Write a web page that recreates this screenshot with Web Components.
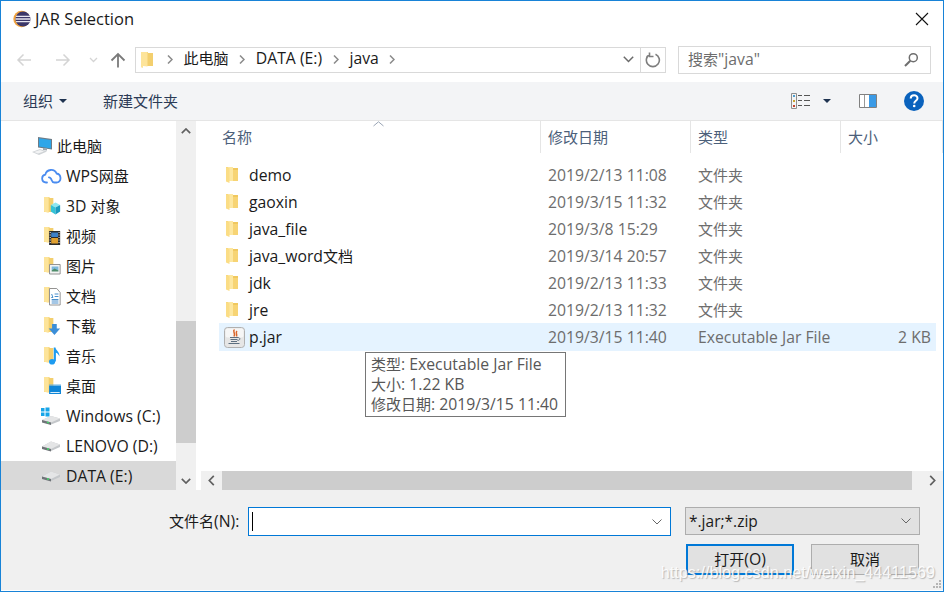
<!DOCTYPE html>
<html>
<head>
<meta charset="utf-8">
<title>JAR Selection</title>
<style>
  html, body { margin: 0; padding: 0; height: 100%; background: #fff; }
  body { font-family: "Open Sans", "Noto Sans CJK SC", sans-serif; font-size: 15.750px; color: #1a1a1a; }
</style>
</head>
<body>
<jar-dialog></jar-dialog>

<script>
const FONT = `"Open Sans", "Noto Sans CJK SC", sans-serif`;

// the dialog's chinese runs are a touch smaller than its latin text
const cjk = (s) => s.replace(/[\u4e00-\u9fff]+/g, (m) => `<span style="font-size:15px">${m}</span>`);

// folder with a small overlay, as in the explorer sidebar
const sideFolder = (inner) => `<svg width="17" height="20" viewBox="0 0 20 20" preserveAspectRatio="none" style="margin-left:3px">
    <path d="M0 1h6l1 1h4v14H0z" fill="#f3cf6e"/>
    <path d="M0 1h5.500v16L0 15.500z" fill="#fde49a"/>
    ${inner}
  </svg>`;

const ICONS = {
  eclipse: `<svg width="18" height="18" viewBox="0 0 18 18">
    <circle cx="8.600" cy="9" r="8.300" fill="#f0a340"/>
    <circle cx="10" cy="9" r="7.600" fill="#3c3769"/>
    <path d="M3 6.300h14M2.500 9h15M3 11.700h14" stroke="#e8e6f0" stroke-width="1.300"/>
  </svg>`,
  tinyfolder: `<svg width="13" height="18" viewBox="0 0 13 18">
    <path d="M0 1h7v1h5v13H0z" fill="#f3cf6e"/>
    <path d="M0 1h6.500v14.500L2 15v2l-2-.8z" fill="#fde49a"/>
  </svg>`,
  folder: `<svg width="13" height="18" viewBox="0 0 13 18">
    <path d="M0 1h6l1 1h5v13H0z" fill="#f0c85e"/>
    <path d="M1.500 1H7v14H1.500z" fill="#fde7a0"/>
    <path d="M0 1l3.500 1.200V17L0 15.500z" fill="#fbdd85"/>
    <path d="M7 4h5v11H7z" fill="#f7d474"/>
  </svg>`,
  pc: `<svg width="21" height="18" viewBox="0 0 21 18">
    <path d="M6 0l14 2v10.500L6 10.500z" fill="#6d7b86"/>
    <path d="M7 1.200l12 1.700v8.500L7 9.600z" fill="#2ea6e8"/>
    <path d="M11 11l4 .6v2l-4-.6z" fill="#9aa4ab"/>
    <path d="M0 15l8-3 7 2.500-8 3.500z" fill="#cfd3d6"/>
    <path d="M2 15l6-2 4 1.500-6 2z" fill="#f2f3f4"/>
  </svg>`,
  cloud: `<svg width="21" height="18" viewBox="0 0 21 18">
    <path d="M6 15.500H5a4 4 0 0 1-.7-7.900A6 6 0 0 1 15.600 6.500a4.600 4.600 0 0 1 .4 9h-2.500a3 3 0 0 1-2.800-2.200c-.6-2-1-3-2.800-3" fill="none" stroke="#4a8cf0" stroke-width="1.800" stroke-linecap="round"/>
  </svg>`,
  obj3d: sideFolder(`
    <path d="M8 9l5.500-2.500L19 9l-5.500 2.500z" fill="#8ee6f0"/>
    <path d="M8 9v6.500l5.500 3v-7z" fill="#33c3d6"/>
    <path d="M19 9v6.500l-5.500 3v-7z" fill="#1a9bc0"/>`),
  video: sideFolder(`
    <path d="M6 5h13v14H6z" fill="#2b2b2b"/>
    <path d="M8.500 6.500h8v4.500h-8z" fill="#3d80c8"/>
    <path d="M8.500 12h8v5.500h-8z" fill="#e0a030"/>
    <path d="M7.300 6v1M7.300 8.500v1M7.300 11v1M7.300 13.500v1M7.300 16v1M17.700 6v1M17.700 8.500v1M17.700 11v1M17.700 13.500v1M17.700 16v1" stroke="#eee" stroke-width="1.200"/>`),
  picture: sideFolder(`
    <path d="M6.500 8.500h12.500v9.500H6.500z" fill="#f4f4f4" stroke="#8b8b8b"/>
    <path d="M9 10.500h8v4H9z" fill="#7db8dc"/>
    <path d="M9 14.500l3.500-2 4.500 2v1H9z" fill="#4e8c6a"/>`),
  doc: sideFolder(`
    <path d="M6.500 2.500H15l4 4v12.500H6.500z" fill="#fff" stroke="#8b8b8b"/>
    <path d="M9 8l1.500 3.500H8.500M12.500 8h4.500M12.500 10.500h4.500M9 13.500h8M9 15h8M9 17h8" stroke="#3a86c8" fill="none"/>`),
  download: sideFolder(`
    <path d="M9.500 8h5.500v4.500h4l-6.700 6.500-6.800-6.500h4z" fill="#3b8ed8"/>`),
  music: sideFolder(`
    <ellipse cx="9.500" cy="15.800" rx="3.600" ry="2.800" fill="#1d9bf0"/>
    <path d="M11.500 15.500V1.500h2c.3 3 5 4 4.700 9-1.200-2.400-3-3.400-4.200-3.700v8.700z" fill="#1d9bf0"/>`),
  desktop: sideFolder(`
    <path d="M6 9.500h14v8.500H6z" fill="#0f86d8"/>
    <path d="M7.500 16h11v1h-11z" fill="#d8edf9"/>
    <path d="M6 9h14" stroke="#5aa9de"/>`),
  drivec: `<svg width="20" height="18" viewBox="0 0 20 18">
    <path d="M0 1h3.500v3.500H0zM4.500 .500h4v4h-4zM0 5.500h3.500V9H0zM4.500 5.500h4v4h-4z" fill="#18a5e8"/>
    <path d="M1 13l9-4 9 2.500v2.500l-9 3.500-9-2.500z" fill="#c4c7ca"/>
    <path d="M1 13l9 2.500 9-4-9-2.500z" fill="#e4e5e6"/>
    <path d="M1 13l9 2.500v2.500l-9-2.500z" fill="#6f7478"/>
    <path d="M6 15.300l2 .5" stroke="#47d36a" stroke-width="1.500"/>
  </svg>`,
  drive: `<svg width="20" height="12" viewBox="0 0 20 12">
    <path d="M1 6.500l9-5 9 3v2.500l-9 4-9-2.500z" fill="#c4c7ca"/>
    <path d="M1 6.500l9 2.500 9-4.500-9-3z" fill="#e4e5e6"/>
    <path d="M1 6.500l9 2.500v2.500L1 9z" fill="#6f7478"/>
    <path d="M6 8.800l2 .5" stroke="#47d36a" stroke-width="1.500"/>
  </svg>`,
  jar: `<svg width="21" height="21" viewBox="0 0 21 21">
    <rect x=".500" y=".500" width="20" height="20" rx="3" fill="#e6e6e6" stroke="#b0b0b0"/>
    <rect x="1.500" y="1.500" width="18" height="9" rx="2" fill="#f6f6f6"/>
    <path d="M10.500 2.500c-2.500 2 1.500 3.500-.5 7M13 4c-2 2 .5 2.500-.5 5.500" stroke="#d9662c" stroke-width="1.500" fill="none"/>
    <path d="M6 10.500h8M6.500 12.500h7M7 14.500h6M4.500 16.500h11" stroke="#5c6f80" stroke-width="1.100"/>
    <path d="M14 10.500c2.500 0 2.500 3-.5 3" stroke="#5c6f80" fill="none"/>
  </svg>`,
};

const template = document.createElement('template');
template.innerHTML = `<style>:host{display:inline-flex;align-items:center;justify-content:center;line-height:0}</style><span></span>`;

class DlgIcon extends HTMLElement {
  constructor() {
    super();
    this.attachShadow({ mode: 'open' });
    this.shadowRoot.appendChild(template.content.cloneNode(true));
  }
  connectedCallback() {
    this.shadowRoot.querySelector('span').innerHTML = ICONS[this.getAttribute('name')] || '';
  }
}
customElements.define('dlg-icon', DlgIcon);

class TitleBar extends HTMLElement {
  constructor() {
    super();
    this.attachShadow({ mode: 'open' }).innerHTML = `
      <style>
        :host { display: flex; align-items: center; height: 36px; padding-left: 12px; padding-right: 14px; font-size: 16.500px; color: #1a1a1a; background: #fff; }
        .t { margin-left: 4px; flex: 1; padding-bottom: 2px; }
      </style>
      <dlg-icon name="eclipse"></dlg-icon>
      <span class="t"><slot></slot></span>
      <svg width="14" height="14" viewBox="0 0 14 14"><path d="M1 1l12 12M13 1L1 13" stroke="#111" stroke-width="1.100"/></svg>`;
  }
}
customElements.define('title-bar', TitleBar);

class NavBar extends HTMLElement {
  constructor() {
    super();
    const sep = `<svg class="sep" height="9" viewBox="0 0 6 9"><path d="M1 .5l4 4-4 4"/></svg>`;
    this.attachShadow({ mode: 'open' }).innerHTML = `
      <style>
        :host { display: flex; align-items: center; height: 45px; padding-left: 15px; background: #fff; }
        svg { display: block; }
        .btns { display: flex; align-items: center; width: 119px; }
        .addr { display: flex; align-items: center; width: 529px; height: 24px; border: 1px solid #d9d9d9; font-size: 15.750px; color: #1a1a1a; }
        .crumb { display: flex; align-items: center; gap: 10.700px; margin-left: 5px; flex: 1; }
        .crumb span { padding-bottom: 3px; }
        .crumb dlg-icon { margin-right: 2px; }
        .sep { width: 6px; }
        .sep path { stroke: #8a8a8a; stroke-width: 1.500; fill: none; }
        .refresh { display: flex; align-items: center; justify-content: center; width: 24px; height: 24px; border-left: 1px solid #d9d9d9; }
        .search { display: flex; align-items: center; justify-content: space-between; box-sizing: border-box; width: 253px; height: 28px; margin-left: 12px; padding: 0 11px 0 9px; border: 1px solid #d9d9d9; color: #6d6d6d; font-size: 15.750px; }
        .search > span { padding-bottom: 2px; }
      </style>
      <div class="btns">
        <svg width="16" height="14" viewBox="0 0 16 14" style="margin-right:23px"><path d="M15 7H2M7.500 1.500L2 7l5.500 5.500" stroke="#d4d4d4" stroke-width="1.500" fill="none"/></svg>
        <svg width="16" height="14" viewBox="0 0 16 14" style="margin-right:18px"><path d="M1 7h13M8.500 1.500L14 7l-5.500 5.500" stroke="#d4d4d4" stroke-width="1.500" fill="none"/></svg>
        <svg width="9" height="6" viewBox="0 0 9 6" style="margin-right:12px"><path d="M1 1l3.500 3.500L8 1" stroke="#d4d4d4" stroke-width="1.300" fill="none"/></svg>
        <svg width="16" height="16" viewBox="0 0 16 16"><path d="M8 15.500V2M1.500 8.500L8 2l6.500 6.500" stroke="#7a7a7a" stroke-width="1.800" fill="none"/></svg>
      </div>
      <div class="addr">
        <div class="crumb">
          <dlg-icon name="tinyfolder"></dlg-icon>
          ${sep}
          <span>${cjk('此电脑')}</span>
          ${sep}
          <span>DATA (E:)</span>
          ${sep}
          <span>java</span>
          ${sep}
        </div>
        <svg width="11" height="7" viewBox="0 0 11 7" style="margin-right:6px"><path d="M.8.8l4.700 4.700L10.200.8" stroke="#6a6a6a" stroke-width="1.500" fill="none"/></svg>
        <div class="refresh">
          <svg width="16" height="16" viewBox="0 0 16 16"><path d="M10.500 2.200A6.500 6.500 0 1 1 5 2.300M4.500.5v4h4" stroke="#7e7e7e" stroke-width="1.600" fill="none"/></svg>
        </div>
      </div>
      <div class="search">
        <span>${cjk('搜索')}"java"</span>
        <svg width="15" height="15" viewBox="0 0 15 15"><circle cx="9.300" cy="5.700" r="4" stroke="#6e6e6e" stroke-width="1.500" fill="none"/><path d="M6.300 8.700L1 14" stroke="#6e6e6e" stroke-width="2"/></svg>
      </div>`;
  }
}
customElements.define('nav-bar', NavBar);

class ToolBar extends HTMLElement {
  constructor() {
    super();
    this.attachShadow({ mode: 'open' }).innerHTML = `
      <style>
        :host { display: flex; align-items: center; height: 39px; padding-left: 22px; background: #f3f4f6; color: #2b3a55; font-size: 15px; border-bottom: 1px solid #e5e5e5; box-sizing: border-box; }
        :host > span { padding-bottom: 2px; }
        .caret { margin-left: 6px; margin-right: 36px; }
        .right { margin-left: auto; display: flex; align-items: center; padding-right: 19px; }
      </style>
      <span>组织</span>
      <svg class="caret" width="8" height="4" viewBox="0 0 8 4"><path d="M0 0h8L4 4z" fill="#1f3350"/></svg>
      <span>新建文件夹</span>
      <div class="right">
        <svg width="19" height="16" viewBox="0 0 19 16" style="margin-right:13px">
          <path d="M.5.500h5v15h-5z" fill="#f4f4f4" stroke="#8f8f8f"/>
          <path d="M2 2h2v2H2z" fill="#4d9ed0"/><path d="M2 7h2v2H2z" fill="#c9a32e"/><path d="M2 12h2v2H2z" fill="#c2432e"/>
          <path d="M7 2.500h4M13 2.500h6M7 7.500h4M13 7.500h6M7 12.500h4M13 12.500h6" stroke="#555"/>
        </svg>
        <svg width="8" height="4" viewBox="0 0 8 4" style="margin-right:28px"><path d="M0 0h8L4 4z" fill="#1f3350"/></svg>
        <svg width="18" height="14" viewBox="0 0 18 14" style="margin-right:27px">
          <path d="M.5.500h17v13H.5z" fill="#fff" stroke="#808080"/><path d="M5.500 1v12" stroke="#999"/><path d="M10 1h7v12h-7z" fill="#3a9ae6"/>
        </svg>
        <svg width="20" height="20" viewBox="0 0 20 20"><circle cx="10" cy="10" r="10" fill="#0a62bd"/><path d="M6.700 7.500c0-4.300 6.800-4.300 6.800-.3 0 2.600-3.300 2.700-3.300 5.300" fill="none" stroke="#fff" stroke-width="2"/><circle cx="10.200" cy="15" r="1.300" fill="#fff"/></svg>
      </div>`;
  }
}
customElements.define('tool-bar', ToolBar);

class NavItem extends HTMLElement {
  constructor() {
    super();
    this.attachShadow({ mode: 'open' }).innerHTML = `
      <style>
        :host { display: flex; align-items: center; height: 30px; padding-left: var(--indent, 40px); font-size: 15.750px; color: #1a1a1a; white-space: nowrap; }
        :host([selected]) { background: #d9d9d9; }
        .ic { width: 25px; display: flex; justify-content: flex-start; }
      </style>
      <div class="ic"><slot name="icon"></slot></div>
      <span><slot></slot></span>`;
  }
}
customElements.define('nav-item', NavItem);

class VScroll extends HTMLElement {
  constructor() {
    super();
    this.attachShadow({ mode: 'open' }).innerHTML = `
      <style>
        :host { display: flex; flex-direction: column; width: 20px; background: #f0f0f0; }
        .btn { height: 19px; display: flex; align-items: center; justify-content: center; }
        .track { flex: 1; position: relative; display: flex; flex-direction: column; }
        .top { height: 181px; }
        .thumb { height: 122px; background: #cdcdcd; }
      </style>
      <div class="btn"><svg width="10" height="6" viewBox="0 0 10 6"><path d="M.8 5.200L5 1l4.200 4.200" stroke="#606060" stroke-width="1.700" fill="none"/></svg></div>
      <div class="track"><div class="top"></div><div class="thumb"></div></div>
      <div class="btn"><svg width="10" height="6" viewBox="0 0 10 6"><path d="M.8.800L5 5 9.200.8" stroke="#606060" stroke-width="1.700" fill="none"/></svg></div>`;
  }
}
customElements.define('v-scroll', VScroll);

class SideNav extends HTMLElement {
  constructor() {
    super();
    this.attachShadow({ mode: 'open' }).innerHTML = `
      <style>
        :host { display: flex; width: 200px; height: 100%; background: #fff; }
        .list { width: 175px; padding-top: 10px; box-sizing: border-box; overflow: hidden; }
        v-scroll { height: 369px; }
        .gap { width: 5px; }
      </style>
      <div class="list"><slot></slot></div>
      <v-scroll></v-scroll>
      <div class="gap"></div>`;
  }
}
customElements.define('side-nav', SideNav);

class FileRow extends HTMLElement {
  constructor() {
    super();
    this.attachShadow({ mode: 'open' }).innerHTML = `
      <style>
        :host { display: grid; grid-template-columns: 30px 299px 150px 150px 1fr; align-items: center; height: 27px; font-size: 15.750px; color: #1a1a1a; margin-left: 18px; margin-right: 7px; white-space: nowrap; padding-left: 0; }
        :host([hot]) { background: #e5f3ff; height: 28px; }
        .ic { padding-left: 7px; display: flex; }
        :host([hot]) .ic { padding-left: 5px; }
        .dim { color: #6d6d6d; }
        .size { text-align: right; padding-right: 5px; color: #6d6d6d; }
      </style>
      <div class="ic"><slot name="icon"></slot></div>
      <div><slot name="name"></slot></div>
      <div class="dim"><slot name="date"></slot></div>
      <div class="dim"><slot name="type"></slot></div>
      <div class="size"><slot name="size"></slot></div>`;
  }
}
customElements.define('file-row', FileRow);

class FilePane extends HTMLElement {
  constructor() {
    super();
    this.attachShadow({ mode: 'open' }).innerHTML = `
      <style>
        :host { display: flex; flex-direction: column; flex: 1; min-width: 0; height: 100%; position: relative; background: #fff; }
        .head { display: grid; grid-template-columns: 340px 150px 150px 1fr; height: 32px; font-size: 15px; color: #4c607a; position: relative; }
        .head div { display: flex; align-items: center; padding-left: 7px; padding-bottom: 2px; border-right: 1px solid #e5e5e5; box-sizing: border-box; }
        .head div:first-child { padding-left: 21px; }
        .head div:last-child { border-right: 0; }
        .sort { position: absolute; left: 172px; top: 0; }
        .rows { flex: 1; padding-top: 8px; min-height: 0; }
        .hbar { display: flex; align-items: center; height: 19px; background: #f0f0f0; }
        .hbar .a { width: 21px; display: flex; justify-content: center; }
        .hbar .thumb { width: 690px; height: 19px; background: #cdcdcd; }
        .hbar .b { width: 21px; margin-left: auto; display: flex; justify-content: center; }
        .tip { position: absolute; left: 164px; top: 231px; box-sizing: border-box; width: 201px; height: 65px; padding: 1px 5px; border: 1px solid #767676; background: #fff; color: #575757; font-size: 15.750px; line-height: 20px; white-space: nowrap; }
      </style>
      <div class="head">
        <div>名称</div><div>修改日期</div><div>类型</div><div>大小</div>
        <svg class="sort" width="11" height="6" viewBox="0 0 11 6"><path d="M.5 5L5.500.8 10.500 5" stroke="#9aa5b5" fill="none"/></svg>
      </div>
      <div class="rows"><slot></slot></div>
      <div class="tip">${cjk('类型')}: Executable Jar File<br>${cjk('大小')}: 1.22 KB<br>${cjk('修改日期')}: 2019/3/15 11:40</div>
      <div class="hbar">
        <div class="a"><svg width="7" height="11" viewBox="0 0 7 11"><path d="M5.800.8L1.300 5.500l4.500 4.700" stroke="#606060" stroke-width="1.700" fill="none"/></svg></div>
        <div class="thumb"></div>
        <div class="b"><svg width="7" height="11" viewBox="0 0 7 11"><path d="M1.200.8l4.500 4.700-4.500 4.700" stroke="#606060" stroke-width="1.700" fill="none"/></svg></div>
      </div>`;
  }
}
customElements.define('file-pane', FilePane);

class DlgFooter extends HTMLElement {
  constructor() {
    super();
    this.attachShadow({ mode: 'open' }).innerHTML = `
      <style>
        :host { display: grid; grid-template-columns: 168px 79px 423px 14px 236px; grid-template-rows: 29px 31px; row-gap: 8px; align-content: start; padding-top: 17px; height: 100px; box-sizing: border-box; background: #f0f0f0; font-size: 15.750px; color: #1a1a1a; position: relative; }
        .lbl { grid-column: 2; display: flex; align-items: center; white-space: nowrap; padding-bottom: 2px; }
        .inp { grid-column: 3; box-sizing: border-box; display: flex; align-items: center; justify-content: space-between; border: 1px solid #0078d7; background: #fff; padding: 0 8px 0 3px; }
        .caret { width: 1px; height: 19px; background: #000; }
        .combo { grid-column: 5; box-sizing: border-box; height: 28px; display: flex; align-items: center; justify-content: space-between; border: 1px solid #adadad; background: #e1e1e1; padding: 0 8px 0 3px; width: 235px; font-size: 15.500px; }
        .btns { display: flex; gap: 17px; padding-left: 1px; grid-row: 2; grid-column: 5; }
        .btn { box-sizing: border-box; width: 108px; height: 31px; padding-bottom: 2px; display: flex; align-items: center; justify-content: center; background: #e1e1e1; border: 1px solid #adadad; line-height: 14px; }
        .def { border: 2px solid #0078d7; }
        .mark { position: absolute; right: 8px; bottom: 11px; color: rgba(255,255,255,.9); font: 16.200px/14px "Liberation Sans", sans-serif; text-shadow: 1px 1px 1px rgba(130,130,130,.5); white-space: nowrap; }
        .grip { position: absolute; right: 1px; bottom: 1px; }
      </style>
      <div class="lbl"><span>${cjk('文件名')}(N):</span></div>
      <div class="inp"><div class="caret"></div><svg width="10" height="6" viewBox="0 0 10 6"><path d="M.5.500L5 5 9.500.5" stroke="#666" fill="none"/></svg></div>
      <div class="combo"><span>*.jar;*.zip</span><svg width="10" height="6" viewBox="0 0 10 6"><path d="M.5.500L5 5 9.500.5" stroke="#666" fill="none"/></svg></div>
      <div class="btns"><div class="btn def"><span>${cjk('打开')}(O)</span></div><div class="btn"><span>${cjk('取消')}</span></div></div>
      <div class="mark">https://blog.csdn.net/weixin_44411569</div>
      <svg class="grip" width="10" height="10" viewBox="0 0 10 10"><path d="M7 1h2v2H7zM4 4h2v2H4zM7 4h2v2H7zM1 7h2v2H1zM4 7h2v2H4zM7 7h2v2H7z" fill="#b5b5b5"/></svg>`;
  }
}
customElements.define('dlg-footer', DlgFooter);

const NAV = [
  ['pc', '此电脑', '31px'],
  ['cloud', 'WPS网盘'],
  ['obj3d', '3D 对象'],
  ['video', '视频'],
  ['picture', '图片'],
  ['doc', '文档'],
  ['download', '下载'],
  ['music', '音乐'],
  ['desktop', '桌面'],
  ['drivec', 'Windows (C:)'],
  ['drive', 'LENOVO (D:)'],
  ['drive', 'DATA (E:)', null, true],
];
const FILES = [
  ['folder', 'demo', '2019/2/13 11:08', '文件夹', ''],
  ['folder', 'gaoxin', '2019/3/15 11:32', '文件夹', ''],
  ['folder', 'java_file', '2019/3/8 15:29', '文件夹', ''],
  ['folder', 'java_word文档', '2019/3/14 20:57', '文件夹', ''],
  ['folder', 'jdk', '2019/2/13 11:33', '文件夹', ''],
  ['folder', 'jre', '2019/2/13 11:32', '文件夹', ''],
  ['jar', 'p.jar', '2019/3/15 11:40', 'Executable Jar File', '2 KB'],
];

class JarDialog extends HTMLElement {
  constructor() {
    super();
    const navHtml = NAV.map(([ic, label, indent, sel]) => `
      <nav-item ${sel ? 'selected' : ''} style="${indent ? '--indent:' + indent : ''}">
        <dlg-icon slot="icon" name="${ic}"></dlg-icon>${cjk(label)}
      </nav-item>`).join('');
    const fileHtml = FILES.map(([ic, name, date, type, size]) => `
      <file-row ${ic === 'jar' ? 'hot' : ''}>
        <dlg-icon slot="icon" name="${ic}"></dlg-icon>
        <span slot="name">${cjk(name)}</span>
        <span slot="date">${date}</span>
        <span slot="type">${cjk(type)}</span>
        <span slot="size">${size}</span>
      </file-row>`).join('');
    this.attachShadow({ mode: 'open' }).innerHTML = `
      <style>
        :host { display: flex; flex-direction: column; box-sizing: border-box; width: 944px; height: 592px; border: 1px solid #1883d7; font-family: ${FONT}; overflow: hidden; }
        .main { display: flex; height: 369px; }
      </style>
      <title-bar>JAR Selection</title-bar>
      <nav-bar></nav-bar>
      <tool-bar></tool-bar>
      <div class="main">
        <side-nav>${navHtml}</side-nav>
        <file-pane>${fileHtml}</file-pane>
      </div>
      <dlg-footer></dlg-footer>`;
  }
}
customElements.define('jar-dialog', JarDialog);
</script>
</body>
</html>
